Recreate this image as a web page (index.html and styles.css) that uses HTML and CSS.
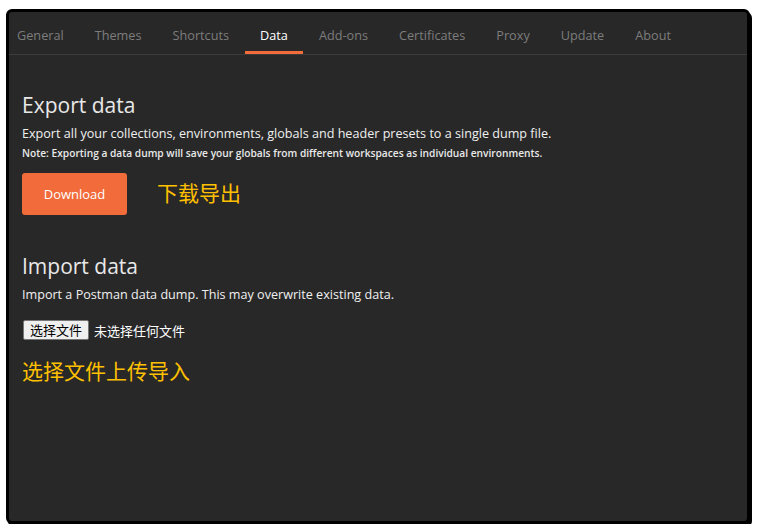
FILE: index.html
```html
<!DOCTYPE html>
<html lang="zh-CN">
<head>
    <meta charset="UTF-8">
    <meta name="viewport" content="width=device-width, initial-scale=1.0">
    <title>Settings - Data</title>
    <link rel="stylesheet" href="styles.css">
</head>
<body>
    <div class="window">
        <nav class="tabs">
            <a class="tab">General</a>
            <a class="tab">Themes</a>
            <a class="tab">Shortcuts</a>
            <a class="tab active">Data</a>
            <a class="tab">Add-ons</a>
            <a class="tab">Certificates</a>
            <a class="tab">Proxy</a>
            <a class="tab">Update</a>
            <a class="tab">About</a>
        </nav>

        <div class="content">
            <section class="export">
                <h2>Export data</h2>
                <p class="desc">Export all your collections, environments, globals and header presets to a single dump file.</p>
                <p class="note">Note: Exporting a data dump will save your globals from different workspaces as individual environments.</p>
                <div class="row">
                    <button class="cta-btn">Download</button>
                    <span class="hint">下载导出</span>
                </div>
            </section>

            <section class="import">
                <h2>Import data</h2>
                <p class="desc">Import a Postman data dump. This may overwrite existing data.</p>
                <div class="file-row">
                    <button class="file-btn">选择文件</button>
                    <span class="file-name">未选择任何文件</span>
                </div>
                <div class="hint big">选择文件上传导入</div>
            </section>
        </div>
    </div>
</body>
</html>
```

FILE: styles.css
```css
body {
    margin: 0;
    padding: 0;
    background-color: #fff;
    font-family: 'Open Sans', 'Noto Sans CJK SC', sans-serif;
}
.window {
    margin: 9px 0 0 6px;
    width: 744px;
    height: 515px;
    box-sizing: border-box;
    border: 3px solid #000;
    border-radius: 6px;
    background-color: #282828;
    box-shadow: 2px 3px 0 #000;
    overflow: hidden;
}
.tabs {
    display: flex;
    height: 42px;
    border-bottom: 1px solid #3c3c3c;
}
.tab {
    padding: 15px 15.5px 0;
    font-size: 12.7px;
    line-height: 16px;
    color: #7d7d7d;
    box-sizing: border-box;
    height: 42px;
    cursor: pointer;
}
.tab:first-child {
    padding-left: 8px;
}
.tab.active {
    color: #fff;
    border-bottom: 3px solid #f26b3a;
}
.content {
    padding: 35px 13px 0;
}
h2 {
    margin: 0;
    font-size: 21px;
    line-height: 30px;
    font-weight: 400;
    color: #e8e8e8;
}
.desc {
    margin: 5px 0 0;
    font-size: 12.6px;
    line-height: 18px;
    color: #f0f0f0;
}
.note {
    margin: 2px 0 0;
    font-size: 10.2px;
    line-height: 16px;
    font-weight: 600;
    color: #e8e8e8;
}
.row {
    display: flex;
    align-items: center;
    margin-top: 12px;
}
.cta-btn {
    width: 105px;
    height: 42px;
    background-color: #f26b3a;
    color: #fff;
    border: none;
    border-radius: 3px;
    font-family: 'Open Sans', sans-serif;
    font-size: 13px;
    font-weight: 500;
    cursor: pointer;
}
.hint {
    margin: 0 0 4px 30px;
    font-family: 'Noto Sans CJK SC', sans-serif;
    font-size: 21px;
    line-height: 28px;
    color: #ffc000;
}
.import {
    margin-top: 36px;
}
.file-row {
    display: flex;
    align-items: center;
    margin-top: 16px;
    font-family: 'Noto Sans CJK SC', sans-serif;
    font-size: 13px;
}
.file-btn {
    margin-left: 1px;
    height: 20px;
    padding: 0 6px;
    font-family: 'Noto Sans CJK SC', sans-serif;
    font-size: 13px;
    line-height: 18px;
    color: #000;
    background-color: #efefef;
    border: 1px solid #767676;
    border-radius: 2px;
}
.file-name {
    margin-left: 5px;
    color: #fff;
}
.hint.big {
    margin: 16px 0 0;
}
```
